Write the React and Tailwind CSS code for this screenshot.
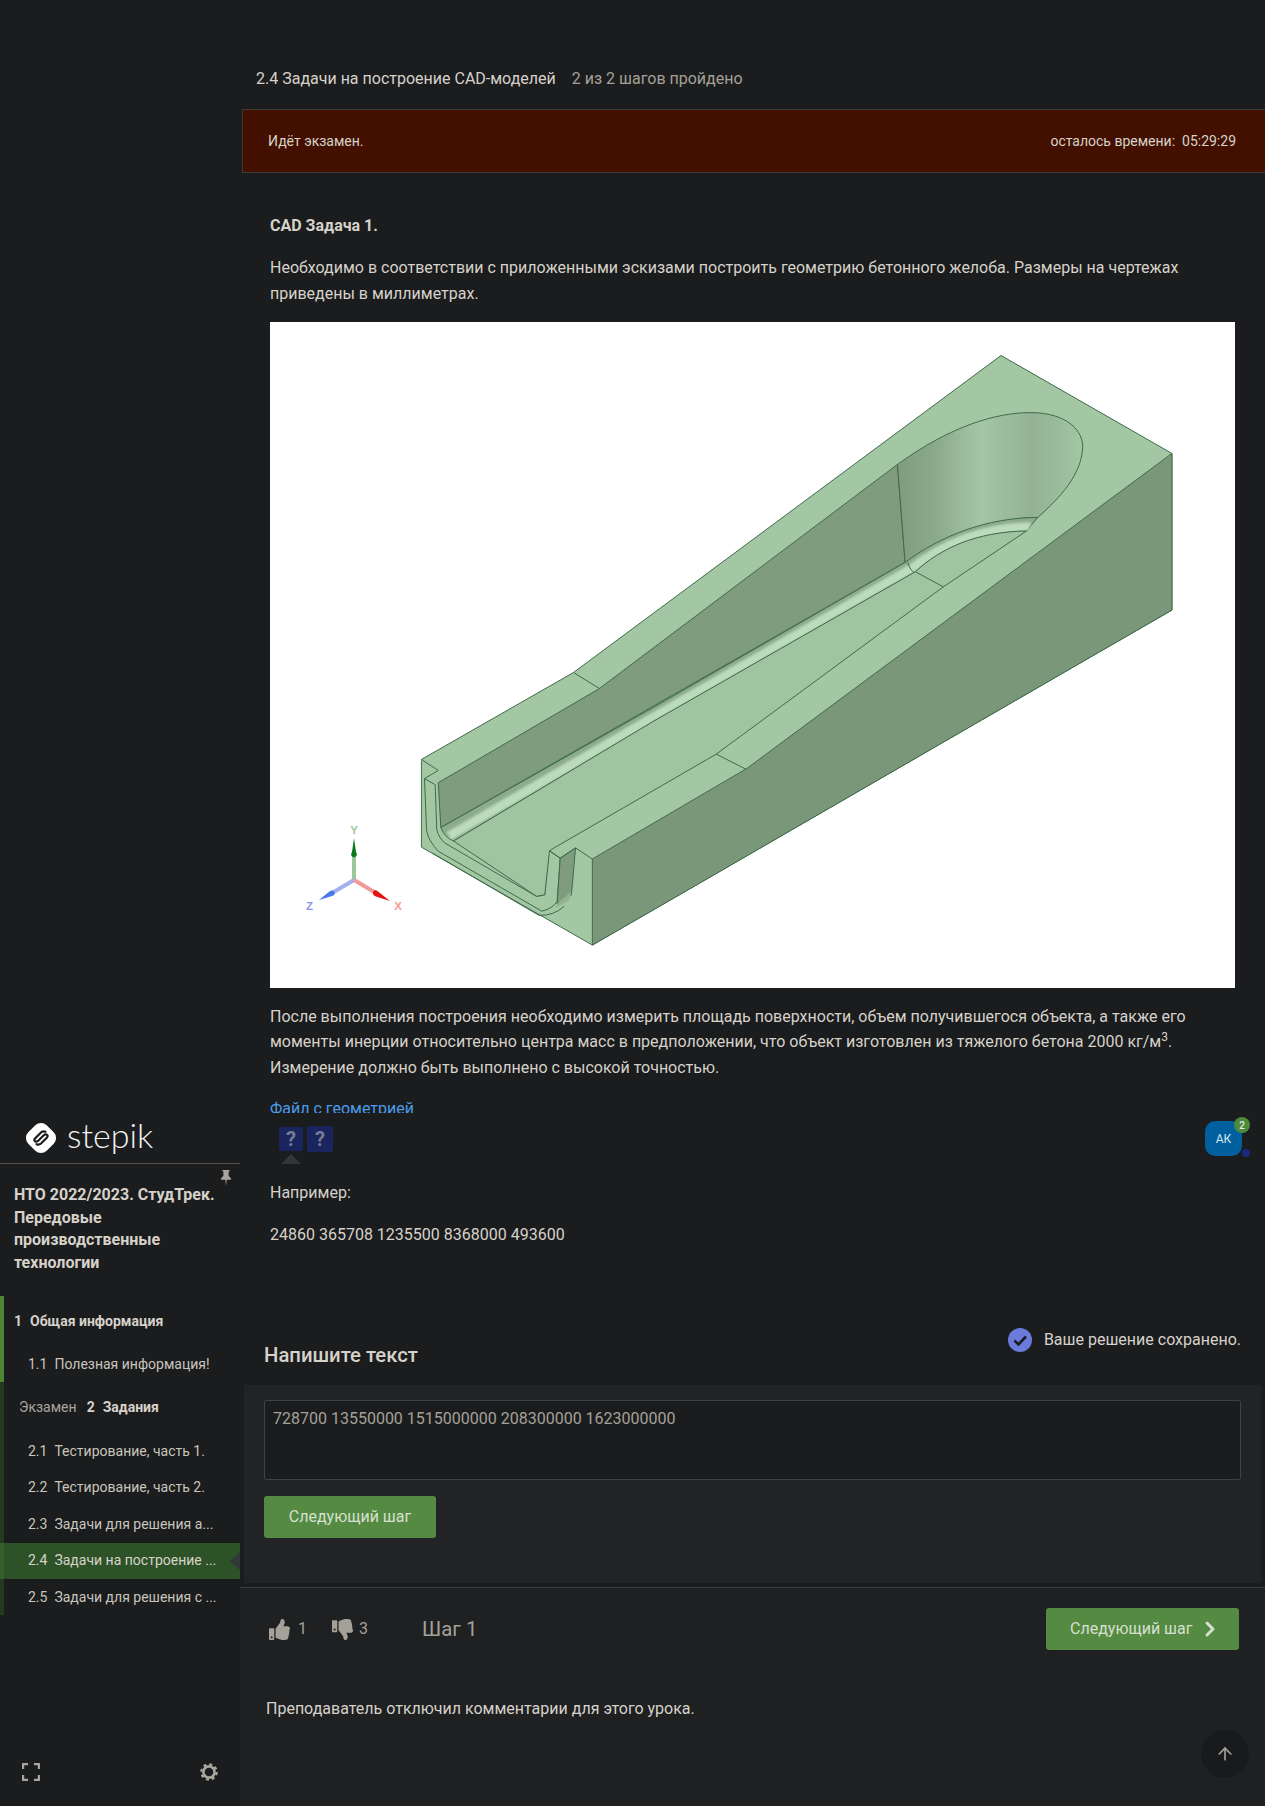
import { FaThumbsUp, FaThumbsDown } from 'react-icons/fa';
import { ChevronRight, ArrowUp } from 'lucide-react';

const lessons = [
    { num: '2.1', title: 'Тестирование, часть 1.' },
    { num: '2.2', title: 'Тестирование, часть 2.' },
    { num: '2.3', title: 'Задачи для решения а...' },
    { num: '2.4', title: 'Задачи на построение ...', active: true },
    { num: '2.5', title: 'Задачи для решения с ...' },
];

const StepikLogo = () => (
    <svg width="34" height="34" viewBox="0 0 34 34" className="shrink-0">
        <rect x="4" y="4" width="26" height="26" rx="8" fill="#ffffff" transform="rotate(45 17 17)" />
        <path
            d="M21.5 10.8 Q19 9.7 17 11.5 L11 17.5 Q9.5 19.5 11.5 20.5 Q13 21 14.5 19.5 L19.5 14.5 Q21 13 22.5 13.5 Q24.5 14.5 23 16.5 L17 22.5 Q15 24.3 12.5 23.2"
            fill="none"
            stroke="#1a1c1e"
            strokeWidth="2.2"
            strokeLinecap="round"
        />
    </svg>
);

// CAD model, path coordinates are taken from a crop, hence the scale on the group
const CadModel = () => {
    const edge = { stroke: '#3f6b4c', strokeWidth: 1, vectorEffect: 'non-scaling-stroke', strokeLinejoin: 'round' };
    return (
        <svg viewBox="270 322 965 666" className="block w-full h-[666px] bg-white">
            <defs>
                <linearGradient id="bowl" x1="975" y1="0" x2="1340" y2="0" gradientUnits="userSpaceOnUse">
                    <stop offset="0" stopColor="#7f9c7f" />
                    <stop offset="0.2" stopColor="#8ba98b" />
                    <stop offset="0.45" stopColor="#a5c7a5" />
                    <stop offset="0.72" stopColor="#93b293" />
                    <stop offset="1" stopColor="#a3c6a3" />
                </linearGradient>
                <filter id="soft" x="-5%" y="-5%" width="110%" height="110%">
                    <feGaussianBlur stdDeviation="3" />
                </filter>
                <clipPath id="filletClip">
                    <path d="M80 1195 L500 898 L990 545 C1060 480 1150 435 1250 435 L1228 468 C1130 470 1060 510 1010 568 L500 932 L105 1228 Q88 1220 80 1195 Z" />
                </clipPath>
            </defs>
            <g transform="translate(400 340) scale(0.5102 0.408)">
                {/* whole silhouette */}
                <path d="M42 1028 L340 815 L1178 38 L1513 278 L1513 662 C1100 960 700 1250 377 1483 L42 1243 Z" fill="#a3c7a3" {...edge} />
                {/* right outer face */}
                <path d="M377 1272 L680 1050 L1513 278 L1513 662 C1100 960 700 1250 377 1483 Z" fill="#7a9779" {...edge} />
                {/* left inner wall */}
                <path d="M75 1085 L390 855 L975 305 L990 545 L80 1195 Z" fill="#7f9c7f" {...edge} />
                {/* bowl */}
                <path d="M975 305 C1080 210 1170 178 1235 178 C1310 178 1340 225 1338 265 C1335 330 1295 385 1250 435 C1160 435 1060 490 990 545 Z" fill="url(#bowl)" {...edge} />
                {/* fillet */}
                <path d="M80 1195 L500 898 L990 545 C1060 480 1150 435 1250 435 L1228 468 C1130 470 1060 510 1010 568 L500 932 L105 1228 Q88 1220 80 1195 Z" fill="#8dac8d" {...edge} />
                <g clipPath="url(#filletClip)">
                    <path d="M96 1216 L500 922 L1003 560 C1065 500 1140 460 1236 458" fill="none" stroke="#bcdcbc" strokeWidth="9" filter="url(#soft)" vectorEffect="non-scaling-stroke" />
                </g>
                <path d="M995 545 Q1000 565 1010 572" fill="none" {...edge} />
                {/* floor */}
                <path d="M105 1228 L500 932 L1010 568 C1060 510 1130 470 1228 468 L1065 605 L620 1015 L295 1250 L284 1360 L268 1364 Z" fill="#a0c3a0" {...edge} />
                {/* edges over the wall tops */}
                <path d="M340 815 L392 855" fill="none" {...edge} />
                <path d="M620 1015 L678 1052" fill="none" {...edge} />
                <path d="M1010 568 L1065 605" fill="none" {...edge} />
                {/* front profile */}
                <path d="M42 1028 L75 1055 L48 1075 L69 1090 L72 1200 Q76 1220 88 1233 L268 1364 L284 1360 L293 1252 L314 1270 L308 1376 Q300 1393 278 1400 L75 1253 Q54 1225 52 1200 L48 1075" fill="#a3c7a3" {...edge} />
                <path d="M314 1270 L344 1245 L336 1360 L308 1382 Z" fill="#7f9c7f" {...edge} />
                <path d="M308 1382 L336 1352 L332 1372 L306 1392 Z" fill="#93b393" />
                <path d="M293 1252 L314 1270 L344 1245 L377 1272" fill="none" {...edge} />
                <path d="M64 1258 L272 1410 Q300 1412 322 1388" fill="none" {...edge} />
            </g>
            {/* axis triad */}
            <line x1="354" y1="880" x2="354" y2="850" stroke="#9cc79c" strokeWidth="4" />
            <path d="M354 838 L356 852 Q358.5 856 354 857.5 Q349.5 856 352 852 Z" fill="#0a7a1a" />
            <line x1="354" y1="880" x2="332" y2="893" stroke="#a3b0ee" strokeWidth="4" />
            <path d="M319 900 L330 891 Q334 889.5 334.5 892 Q335.5 895 332 896 Z" fill="#4a78e8" />
            <line x1="354" y1="880" x2="376" y2="893" stroke="#f09a9a" strokeWidth="4" />
            <path d="M390 901 L378 891.5 Q374 889 373 892 Q372.5 895.5 376 896.5 Z" fill="#e81010" />
            <text x="354" y="834" textAnchor="middle" fontSize="11.5" fontWeight="700" fill="#9cc79c" fontFamily="Liberation Sans, sans-serif">Y</text>
            <text x="309.5" y="910" textAnchor="middle" fontSize="11.5" fontWeight="700" fill="#8c96ee" fontFamily="Liberation Sans, sans-serif">Z</text>
            <text x="398" y="910" textAnchor="middle" fontSize="11.5" fontWeight="700" fill="#f59a9a" fontFamily="Liberation Sans, sans-serif">X</text>
        </svg>
    );
};

const Sidebar = () => (
    <aside className="flex flex-col w-[240px] shrink-0 mt-[1112px] h-[694px] bg-[#1a1c1e]">
        {/* Logo */}
        <div className="flex items-center h-[51px] pl-[24px] gap-[9px] border-b border-[#55524d] box-content">
            <StepikLogo />
            <span className="font-['Lato'] font-light text-[34px] leading-none text-[#f2f2f2] -mt-[6px]">stepik</span>
        </div>

        {/* Course title */}
        <div className="relative px-[14px] pt-[20px] h-[132px]">
            <svg width="12" height="18" viewBox="0 0 12 18" className="absolute right-[8px] top-[6px]" fill="#aaa59c">
                <path d="M2.5 0h7v1.5H8.6v4.2L11 8.5v1.3H6.7L6 16 5.3 9.8H1V8.5l2.4-2.8V1.5h-.9z" />
            </svg>
            <div className="font-bold text-[16px] leading-[22.6px] text-[#d6d2ca]">
                НТО 2022/2023. СтудТрек.<br />Передовые<br />производственные<br />технологии
            </div>
        </div>

        {/* Section 1 */}
        <div className="border-l-4 border-[#4d8533] h-[86px]">
            <div className="flex items-center h-[50px] pl-[10px] font-bold text-[14px] text-[#d6d2ca]">
                <span className="mr-[8px]">1</span>Общая информация
            </div>
            <div className="flex items-center h-[36px] pl-[24px] text-[14px] text-[#c9c5bd]">
                <span className="mr-[7px]">1.1</span>Полезная информация!
            </div>
        </div>

        {/* Section 2 */}
        <div className="border-l-4 border-[#233a20] h-[233px]">
            <div className="flex items-center h-[50px] pl-[15px] text-[14px] text-[#d6d2ca]">
                <span className="mr-[10px] text-[#aaa59c]">Экзамен</span>
                <span className="font-bold mr-[8px]">2</span>
                <span className="font-bold">Задания</span>
            </div>
            <div className="flex flex-col gap-[0.5px] -ml-[4px] pt-[1px]">
                {lessons.map((l) => (
                    <div
                        key={l.num}
                        className={l.active
                            ? 'relative flex items-center h-[36px] pl-[24px] text-[14px] text-[#d6d2ca] bg-[#2e5227] border-l-4 border-[#36602b]'
                            : 'flex items-center h-[36px] pl-[28px] text-[14px] text-[#c9c5bd]'}
                    >
                        <span className="mr-[7px]">{l.num}</span>{l.title}
                        {l.active && (
                            <span className="absolute right-0 top-[9px] w-0 h-0 border-y-[9px] border-y-transparent border-r-[10px] border-r-[#33373a]"></span>
                        )}
                    </div>
                ))}
            </div>
        </div>

        {/* Bottom tools */}
        <div className="flex items-center justify-between mt-auto h-[68px] pl-[22px] pr-[22px] text-[#aaa59c]">
            <svg width="18" height="18" viewBox="0 0 18 18" fill="none" stroke="currentColor" strokeWidth="2.4">
                <path d="M1 6V1h5M12 1h5v5M17 12v5h-5M6 17H1v-5" />
            </svg>
            <svg width="18" height="18" viewBox="0 0 18 18" fill="none" stroke="currentColor">
                <circle cx="9" cy="9" r="5.6" strokeWidth="2.6" />
                <circle cx="9" cy="9" r="7.6" strokeWidth="2.4" strokeDasharray="3 2.97" />
            </svg>
        </div>
    </aside>
);

export default function App() {
    return (
        <div className="flex w-full h-[1806px] overflow-hidden bg-[#1a1c1e] font-['Roboto',sans-serif] text-[#d6d2ca]">
            <Sidebar />
            <main className="flex flex-col flex-1 min-w-0">
                {/* Breadcrumb */}
                <div className="flex h-[109px] pt-[67px] pl-[16px] text-[16px] leading-[24px]">
                    <span>2.4 Задачи на построение CAD-моделей</span>
                    <span className="ml-[16px] text-[#a5a198]">2 из 2 шагов пройдено</span>
                </div>

                {/* Exam banner */}
                <div className="flex items-center justify-between h-[64px] ml-[2px] pl-[25px] pr-[29px] bg-[#431000] border border-r-0 border-[#3c3b3a] text-[14px] text-[#d6d2ca]">
                    <span>Идёт экзамен.</span>
                    <span>осталось времени:&nbsp; 05:29:29</span>
                </div>

                {/* Step text */}
                <div className="pl-[30px] pr-[30px] text-[16px] leading-[26px]">
                    <p className="mt-[40px] font-bold">CAD Задача 1.</p>
                    <p className="mt-[16px]">
                        Необходимо в соответствии с приложенными эскизами построить геометрию бетонного желоба. Размеры на чертежах приведены в миллиметрах.
                    </p>
                    <div className="mt-[15px]">
                        <CadModel />
                    </div>
                    <p className="mt-[16px] leading-[25.4px]">
                        После выполнения построения необходимо измерить площадь поверхности, объем получившегося объекта, а также его моменты инерции относительно центра масс в предположении, что объект изготовлен из тяжелого бетона 2000 кг/м<sup className="text-[12px]">3</sup>. Измерение должно быть выполнено с высокой точностью.
                    </p>
                    <div className="h-[17px] mt-[16px] overflow-hidden text-[#4c9be8]">Файл с геометрией</div>
                </div>

                {/* Step nav row */}
                <div className="relative flex items-start justify-between h-[53px] pl-[39px] pr-[23px] bg-[#1a1c1e]">
                    <div className="flex gap-[4px] pt-[14px]">
                        <div className="flex items-center justify-center w-[24px] h-[24px] rounded-[2px] bg-[#1a2560] font-bold text-[20px] text-[#777c92]">?</div>
                        <div className="flex items-center justify-center w-[26px] h-[26px] -mt-[1px] rounded-[2px] bg-[#1a2560] font-bold text-[20px] text-[#777c92]">?</div>
                    </div>
                    <span className="absolute left-[41px] top-[41px] w-0 h-0 border-x-[10px] border-x-transparent border-b-[10px] border-b-[#33373a]"></span>
                    <div className="relative mt-[8px] w-[37px] h-[35px] rounded-[10px] bg-[#00609f] flex items-center justify-center text-[12px] text-[#d6e6f2]">
                        АК
                        <span className="absolute -top-[4px] -right-[8px] flex items-center justify-center w-[16px] h-[16px] rounded-full bg-[#4a8a3a] text-[10px] font-medium text-[#e8e8e8]">2</span>
                        <span className="absolute -bottom-[1px] -right-[8px] w-[8px] h-[8px] rounded-full bg-[#1a2a80]"></span>
                    </div>
                </div>

                {/* Example */}
                <div className="pl-[30px] text-[16px] leading-[26px]">
                    <p className="mt-[14px]">Например:</p>
                    <p className="mt-[16px]">24860 365708 1235500 8368000 493600</p>
                </div>

                {/* Answer */}
                <div className="flex items-start justify-between mt-[80px] pl-[24px] pr-[24px]">
                    <h3 className="mt-[13px] font-medium text-[20.3px] leading-[28px]">Напишите текст</h3>
                    <div className="flex items-center gap-[12px] text-[16px] leading-[24px]">
                        <svg width="24" height="24" viewBox="0 0 24 24">
                            <circle cx="12" cy="12" r="12" fill="#6b7bdb" />
                            <path d="M6.5 12.5 L10.5 16.5 L18 8.5" fill="none" stroke="#1a1c1e" strokeWidth="2.6" />
                        </svg>
                        Ваше решение сохранено.
                    </div>
                </div>
                <div className="mt-[16px] ml-[4px] mr-[4px] h-[198px] px-[20px] pt-[15px] bg-[#212325]">
                    <div className="h-[80px] px-[8px] pt-[6px] rounded-[2px] bg-[#1a1c1e] border border-[#3f4245] text-[16px] leading-[24px] text-[#a5a198]">
                        728700 13550000 1515000000 208300000 1623000000
                    </div>
                    <button className="mt-[16px] w-[172px] h-[42px] rounded-[3px] bg-[#548a41] text-[16px] text-[#d6e0d0]">Следующий шаг</button>
                </div>

                {/* Footer */}
                <div className="flex flex-col flex-1 mt-[4px] bg-[#1f2022] border-t border-[#3c3e40]">
                    <div className="flex items-center h-[83px] pl-[29px] pr-[26px] pb-[1px] text-[#a5a198]">
                        <FaThumbsUp size={21} />
                        <span className="ml-[8px] text-[16px]">1</span>
                        <FaThumbsDown size={21} className="ml-[25px]" />
                        <span className="ml-[6px] text-[16px]">3</span>
                        <span className="ml-[54px] text-[20.4px]">Шаг 1</span>
                        <button className="flex items-center ml-auto w-[193px] h-[42px] pl-[24px] gap-[6px] rounded-[3px] bg-[#548a41] text-[16px] text-[#d6e0d0]">
                            Следующий шаг
                            <ChevronRight size={24} strokeWidth={3} />
                        </button>
                    </div>
                    <p className="mt-[26px] pl-[26px] text-[16px] leading-[24px]">Преподаватель отключил комментарии для этого урока.</p>
                    <div className="flex justify-end mt-[9px] pr-[16px]">
                        <div className="flex items-center justify-center w-[48px] h-[48px] rounded-full bg-[#191a1c] text-[#a5a198]">
                            <ArrowUp size={20} strokeWidth={2} />
                        </div>
                    </div>
                </div>
            </main>
        </div>
    );
}
